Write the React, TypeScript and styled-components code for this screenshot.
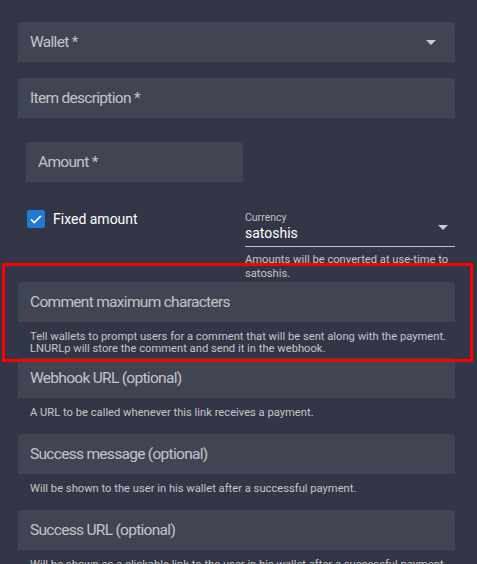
import React from "react";
import styled, { createGlobalStyle } from "styled-components";

const Global = createGlobalStyle`
  html, body { margin: 0; padding: 0; background: #333646; }
  body { font-family: Roboto, "Liberation Sans", sans-serif; -webkit-font-smoothing: antialiased; }
`;

const Page = styled.div`
  position: relative;
  height: 564px;
  overflow: hidden;
  padding: 22px 22px 0 18px;
  box-sizing: border-box;
`;

const Column = styled.div`
  display: flex;
  flex-direction: column;
`;

const FieldWrap = styled.div<{ $mb: number; $mt?: number; $indent?: number; $width?: number }>`
  position: relative;
  margin-top: ${(p) => p.$mt ?? 0}px;
  margin-bottom: ${(p) => p.$mb}px;
  margin-left: ${(p) => p.$indent ?? 0}px;
  width: ${(p) => (p.$width ? `${p.$width}px` : "auto")};
`;

const FieldBox = styled.div`
  height: 40px;
  box-sizing: border-box;
  padding: 0 19px 0 12px;
  background: #414453;
  border-radius: 4px 4px 0 0;
  display: flex;
  align-items: center;
  justify-content: space-between;
  color: rgba(255, 255, 255, 0.7);
  font-size: 15.5px;
  letter-spacing: -0.7px;
`;

const Arrow = styled.span`
  width: 0;
  height: 0;
  border-left: 5px solid transparent;
  border-right: 5px solid transparent;
  border-top: 5px solid rgba(255, 255, 255, 0.75);
`;

const Hint = styled.div`
  padding: 9px 12px 0;
  font-size: 11.2px;
  line-height: 12px;
  color: rgba(255, 255, 255, 0.72);
  height: 20px;
  box-sizing: border-box;
  overflow: visible;
  white-space: nowrap;
`;

const Row = styled.div`
  display: flex;
  margin-top: 24px;
  margin-bottom: 1px;
`;

const CheckCol = styled.div`
  width: 227px;
  padding: 4px 0 0 9px;
  box-sizing: border-box;
  display: flex;
  align-items: flex-start;
  gap: 8px;
`;

const CheckBox = styled.span`
  width: 18px;
  height: 18px;
  border-radius: 2px;
  background: #1f7ad6;
  display: flex;
  align-items: center;
  justify-content: center;
  flex-shrink: 0;
`;

const CheckLabel = styled.span`
  font-size: 14px;
  line-height: 18px;
  color: #ffffff;
`;

const CurrencyCol = styled.div`
  flex: 1;
`;

const SelectStack = styled.div`
  border-bottom: 1px solid rgba(255, 255, 255, 0.7);
  height: 41px;
  box-sizing: border-box;
  display: flex;
  align-items: center;
  justify-content: space-between;
  padding: 2px 7px 0 0;
`;

const SelectText = styled.div`
  display: flex;
  flex-direction: column;
`;

const SmallLabel = styled.span`
  font-size: 10.5px;
  line-height: 12px;
  color: rgba(255, 255, 255, 0.7);
`;

const SelectValue = styled.span`
  font-size: 14px;
  line-height: 18px;
  color: #ffffff;
`;

const WrapHint = styled.div`
  padding-top: 6px;
  font-size: 11.2px;
  line-height: 14px;
  color: rgba(255, 255, 255, 0.72);
  width: 210px;
`;

const Highlight = styled.div`
  position: absolute;
  left: 2px;
  top: 263px;
  width: 471px;
  height: 99px;
  box-sizing: border-box;
  border: 3px solid #ff0000;
  pointer-events: none;
`;

type FieldProps = {
  label: string;
  hint?: string[];
  select?: boolean;
  mb: number;
};

const Field = ({ label, hint, select, mb }: FieldProps) => (
  <FieldWrap $mb={mb}>
    <FieldBox>
      <span>{label}</span>
      {select && <Arrow />}
    </FieldBox>
    {hint && (
      <Hint>
        {hint.map((line, i) => (
          <div key={i}>{line}</div>
        ))}
      </Hint>
    )}
  </FieldWrap>
);

export default function App() {
  return (
    <>
      <Global />
      <Page>
        <Column>
          <Field label="Wallet *" select mb={16} />
          <Field label="Item description *" mb={0} />
          <FieldWrap $mb={0} $mt={24} $indent={8} $width={217}>
            <FieldBox>
              <span>Amount *</span>
            </FieldBox>
          </FieldWrap>
          <Row>
            <CheckCol>
              <CheckBox>
                <svg width="14" height="14" viewBox="0 0 24 24">
                  <path d="M3.5 12.5 L9 18 L20.5 6.5" fill="none" stroke="#fff" strokeWidth="3" />
                </svg>
              </CheckBox>
              <CheckLabel>Fixed amount</CheckLabel>
            </CheckCol>
            <CurrencyCol>
              <SelectStack>
                <SelectText>
                  <SmallLabel>Currency</SmallLabel>
                  <SelectValue>satoshis</SelectValue>
                </SelectText>
                <Arrow />
              </SelectStack>
              <WrapHint>Amounts will be converted at use-time to satoshis.</WrapHint>
            </CurrencyCol>
          </Row>
          <Field
            label="Comment maximum characters"
            hint={[
              "Tell wallets to prompt users for a comment that will be sent along with the payment.",
              "LNURLp will store the comment and send it in the webhook.",
            ]}
            mb={16}
          />
          <Field label="Webhook URL (optional)" hint={["A URL to be called whenever this link receives a payment."]} mb={16} />
          <Field
            label="Success message (optional)"
            hint={["Will be shown to the user in his wallet after a successful payment."]}
            mb={16}
          />
          <Field
            label="Success URL (optional)"
            hint={["Will be shown as a clickable link to the user in his wallet after a successful payment."]}
            mb={16}
          />
        </Column>
        <Highlight />
      </Page>
    </>
  );
}
